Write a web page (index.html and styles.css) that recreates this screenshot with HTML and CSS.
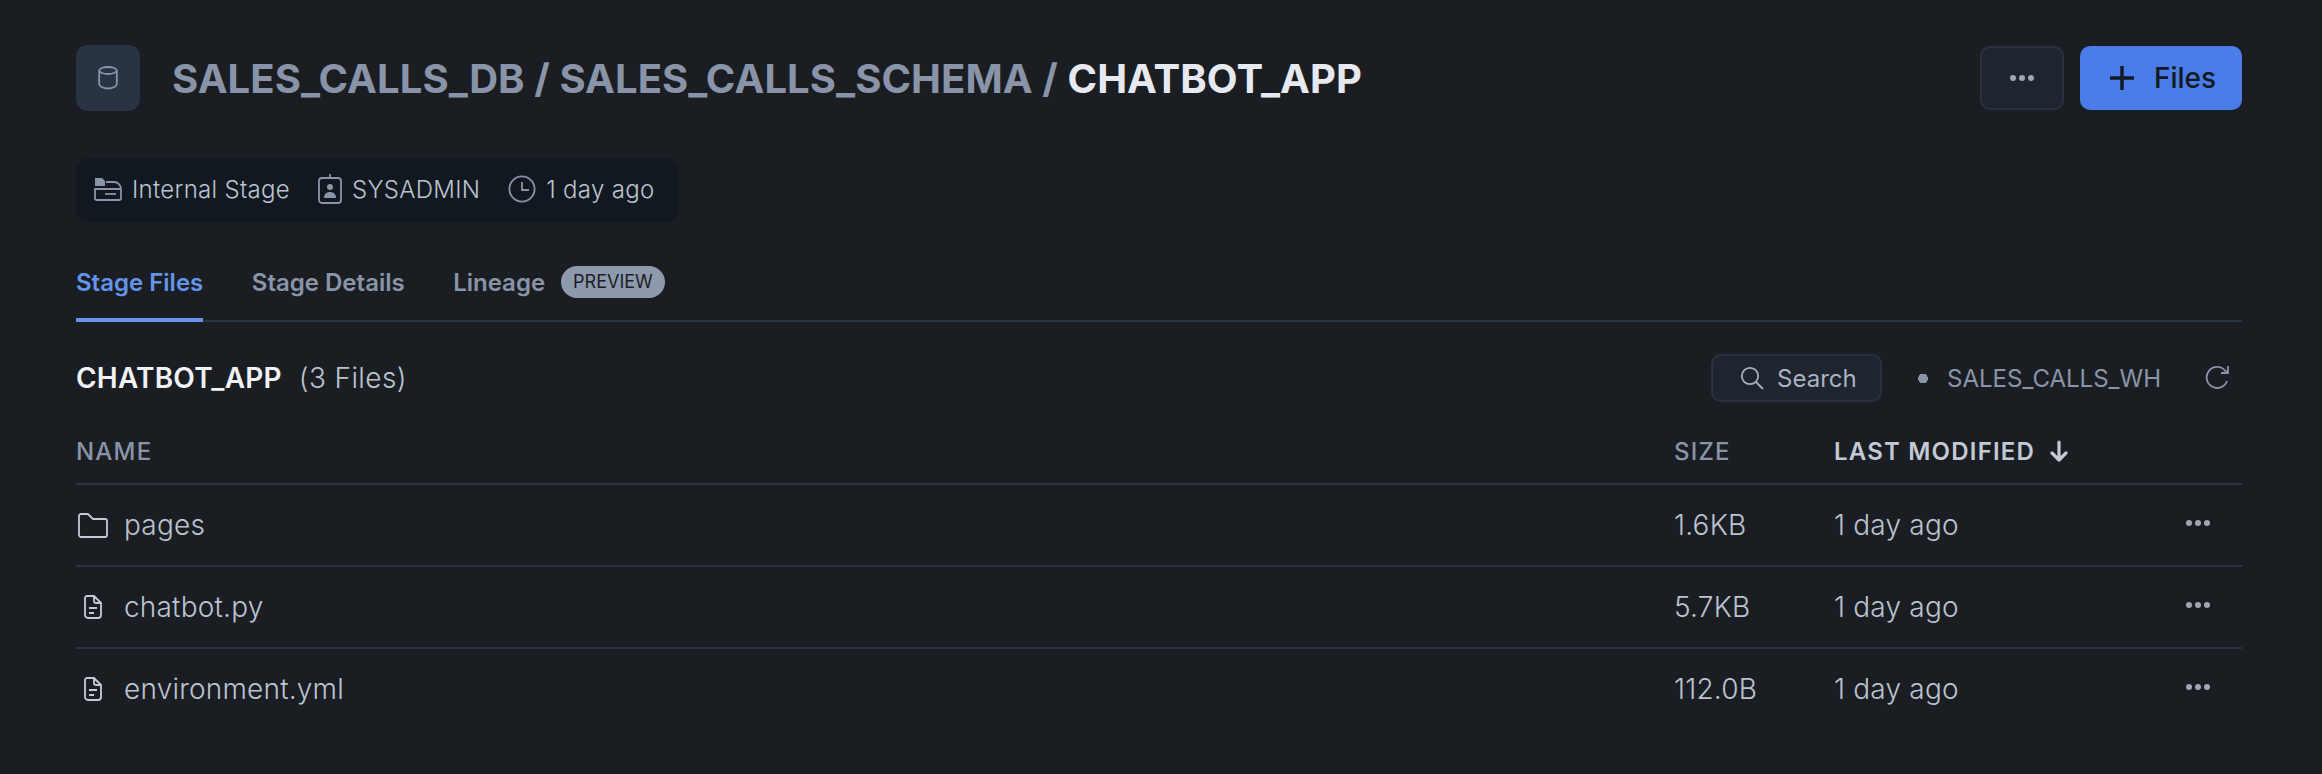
FILE: index.html
```html
<!DOCTYPE html>
<html lang="en">
<head>
    <meta charset="UTF-8">
    <title>CHATBOT_APP</title>
    <link rel="stylesheet" href="styles.css">
</head>
<body>
    <div class="page">
        <header class="top">
            <div class="db-icon">
                <svg width="20" height="24" viewBox="0 0 20 24" fill="none" stroke="#8a94a8" stroke-width="1.8">
                    <ellipse cx="10" cy="4.500" rx="8.800" ry="3.500"/>
                    <path d="M1.200 4.500V18c0 2.200 3.800 4.500 8.800 4.500s8.800-2.300 8.800-4.500V4.500"/>
                </svg>
            </div>
            <h1 class="crumbs">SALES_CALLS_DB / SALES_CALLS_SCHEMA / <span class="crumb-current">CHATBOT_APP</span></h1>
            <div class="top-actions">
                <button class="btn-more" type="button">
                    <svg width="26" height="8" viewBox="0 0 26 8" fill="#a0a6b4"><circle cx="4" cy="4" r="3"/><circle cx="13" cy="4" r="3"/><circle cx="22" cy="4" r="3"/></svg>
                </button>
                <button class="btn-files" type="button">
                    <svg width="24" height="24" viewBox="0 0 24 24" stroke="#141820" stroke-width="3.400" fill="none"><path d="M12 0v24M0 12h24"/></svg>
                    Files
                </button>
            </div>
        </header>

        <div class="meta">
            <span class="meta-item">
                <svg width="28" height="24" viewBox="0 0 28 24" fill="none" stroke="#8a94a8" stroke-width="1.800">
                    <path d="M1 1h7l3 3v5H1z" fill="#8a94a8" stroke="none"/>
                    <path d="M12 5h8a7 7 0 0 1 7 7H1v9a2 2 0 0 0 2 2h22a2 2 0 0 0 2-2v-9"/>
                    <path d="M11 17h11"/>
                </svg>
                Internal Stage
            </span>
            <span class="meta-item">
                <svg width="24" height="30" viewBox="0 0 24 30" fill="none" stroke="#8a94a8" stroke-width="1.800">
                    <path d="M12 0v4"/>
                    <rect x="1" y="4" width="22" height="25" rx="3"/>
                    <circle cx="12" cy="13" r="3" fill="#8a94a8" stroke="none"/>
                    <path d="M6 24c0-4 2.500-6 6-6s6 2 6 6z" fill="#8a94a8" stroke="none"/>
                </svg>
                SYSADMIN
            </span>
            <span class="meta-item">
                <svg width="28" height="28" viewBox="0 0 28 28" fill="none" stroke="#8a94a8" stroke-width="1.800">
                    <circle cx="14" cy="14" r="12.600"/>
                    <path d="M14 7v8h7"/>
                </svg>
                1 day ago
            </span>
        </div>

        <nav class="tabs">
            <a class="tab tab-active">Stage Files</a>
            <a class="tab">Stage Details</a>
            <a class="tab">Lineage <span class="badge">PREVIEW</span></a>
        </nav>

        <div class="toolbar">
            <div class="folder-title"><b>CHATBOT_APP</b><span class="folder-count">(3 Files)</span></div>
            <div class="toolbar-right">
                <button class="btn-search" type="button">
                    <svg width="24" height="24" viewBox="0 0 24 24" fill="none" stroke="#a9b1c2" stroke-width="1.800"><circle cx="10" cy="10" r="8.200"/><path d="M16 16l7 7"/></svg>
                    Search
                </button>
                <span class="warehouse">SALES_CALLS_WH</span>
                <svg class="refresh" width="26" height="26" viewBox="0 0 26 26" fill="none" stroke="#8a94a8" stroke-width="1.800">
                    <path d="M22 16a10.500 10.500 0 1 1-2-10.500L23 8M23 1v7h-7"/>
                </svg>
            </div>
        </div>

        <div class="file-table">
            <div class="row row-head">
                <div>NAME</div>
                <div>SIZE</div>
                <div class="sorted">LAST MODIFIED
                    <svg width="20" height="22" viewBox="0 0 20 22" fill="none" stroke="#c3c9d6" stroke-width="3.200" stroke-linecap="round" stroke-linejoin="round"><path d="M10 2v18M3 13l7 7 7-7"/></svg>
                </div>
                <div></div>
            </div>
            <div class="row">
                <div class="name-cell">
                    <span class="file-icon">
                        <svg width="30" height="25" viewBox="0 0 30 25" fill="none" stroke="#c3c9d6" stroke-width="1.800" stroke-linejoin="round"><path d="M1 3a2 2 0 0 1 2-2h7l5 5h12a2 2 0 0 1 2 2v14a2 2 0 0 1-2 2H3a2 2 0 0 1-2-2z"/></svg>
                    </span>
                    pages
                </div>
                <div>1.6KB</div>
                <div>1 day ago</div>
                <div class="row-more"><svg width="26" height="8" viewBox="0 0 26 8" fill="#a0a6b4"><circle cx="4" cy="4" r="3"/><circle cx="13" cy="4" r="3"/><circle cx="22" cy="4" r="3"/></svg></div>
            </div>
            <div class="row">
                <div class="name-cell">
                    <span class="file-icon">
                        <svg width="18" height="24" viewBox="0 0 18 24" fill="none" stroke="#c3c9d6" stroke-width="1.800" stroke-linejoin="round"><path d="M3 1h7l7 7v12a3 3 0 0 1-3 3H4a3 3 0 0 1-3-3V3a2 2 0 0 1 2-2zM10 1v5a2 2 0 0 0 2 2h5M5 13h8M5 18h5"/></svg>
                    </span>
                    chatbot.py
                </div>
                <div>5.7KB</div>
                <div>1 day ago</div>
                <div class="row-more"><svg width="26" height="8" viewBox="0 0 26 8" fill="#a0a6b4"><circle cx="4" cy="4" r="3"/><circle cx="13" cy="4" r="3"/><circle cx="22" cy="4" r="3"/></svg></div>
            </div>
            <div class="row">
                <div class="name-cell">
                    <span class="file-icon">
                        <svg width="18" height="24" viewBox="0 0 18 24" fill="none" stroke="#c3c9d6" stroke-width="1.800" stroke-linejoin="round"><path d="M3 1h7l7 7v12a3 3 0 0 1-3 3H4a3 3 0 0 1-3-3V3a2 2 0 0 1 2-2zM10 1v5a2 2 0 0 0 2 2h5M5 13h8M5 18h5"/></svg>
                    </span>
                    environment.yml
                </div>
                <div>112.0B</div>
                <div>1 day ago</div>
                <div class="row-more"><svg width="26" height="8" viewBox="0 0 26 8" fill="#a0a6b4"><circle cx="4" cy="4" r="3"/><circle cx="13" cy="4" r="3"/><circle cx="22" cy="4" r="3"/></svg></div>
            </div>
        </div>
    </div>
</body>
</html>
```

FILE: styles.css
```css
body {
    margin: 0;
    background-color: #1a1e23;
    font-family: Inter, "Noto Sans", sans-serif;
    color: #bcc3d1;
}
.page {
    padding: 45px 80px 0 76px;
    height: 774px;
    box-sizing: border-box;
    overflow: hidden;
}
.top {
    display: flex;
    align-items: center;
    height: 66px;
}
.db-icon {
    width: 64px;
    height: 66px;
    border-radius: 12px;
    background-color: #2a3344;
    display: flex;
    align-items: center;
    justify-content: center;
}
.crumbs {
    margin: 0 0 0 32px;
    font-size: 40px;
    font-weight: 700;
    letter-spacing: 0.08px;
    color: #8a94a8;
}
.crumb-current {
    color: #e6e9ef;
}
.top-actions {
    margin-left: auto;
    display: flex;
    gap: 16px;
}
.btn-more {
    width: 84px;
    height: 64px;
    background-color: #1e252f;
    border: 2px solid #2a3140;
    border-radius: 10px;
    display: flex;
    align-items: center;
    justify-content: center;
    padding: 0;
}
.btn-files {
    width: 162px;
    height: 64px;
    background-color: #4a7dea;
    color: #141820;
    border: none;
    border-radius: 10px;
    font: 500 28px Inter, sans-serif;
    display: flex;
    align-items: center;
    gap: 20px;
    padding: 0 0 0 30px;
}
.meta {
    margin-top: 47px;
    display: inline-flex;
    align-items: center;
    gap: 28px;
    height: 64px;
    padding: 0 25px 2px 18px;
    box-sizing: border-box;
    background-color: #111820;
    border-radius: 12px;
    font-size: 24px;
    font-weight: 350;
    letter-spacing: 0.3px;
    color: #bcc3d1;
}
.meta-item {
    display: flex;
    align-items: center;
    gap: 10px;
}
.tabs {
    margin-top: 30px;
    display: flex;
    gap: 48.500px;
    height: 68px;
    border-bottom: 2px solid #2a3347;
}
.tab {
    font-size: 24px;
    font-weight: 600;
    color: #8a94a8;
    display: flex;
    align-items: center;
    height: 60px;
    padding-bottom: 8px;
}
.tab-active {
    color: #6495ec;
    border-bottom: 4px solid #6495ec;
    padding-bottom: 6px;
}
.badge {
    margin-left: 16px;
    background-color: #8f99ad;
    color: #1a1e23;
    font-size: 18px;
    font-weight: 400;
    height: 32px;
    line-height: 32px;
    padding: 0 12px;
    border-radius: 16px;
}
.toolbar {
    display: flex;
    align-items: center;
    justify-content: space-between;
    height: 72px;
    margin-top: 20px;
}
.folder-title {
    font-size: 28px;
}
.folder-title b {
    color: #f0f2f6;
    font-weight: 600;
    letter-spacing: 0.2px;
}
.folder-count {
    margin-left: 17px;
    font-weight: 350;
    letter-spacing: 0.4px;
    color: #bcc3d1;
}
.toolbar-right {
    display: flex;
    align-items: center;
}
.btn-search {
    width: 171px;
    height: 48px;
    background-color: #1e252f;
    border: 2px solid #2a3140;
    border-radius: 10px;
    color: #a9b1c2;
    font: 400 24px Inter, sans-serif;
    display: flex;
    align-items: center;
    gap: 13px;
    padding: 0 0 0 27px;
}
.warehouse {
    margin-left: 36px;
    padding-left: 29px;
    font-size: 24px;
    color: #8a94a8;
    background: radial-gradient(circle 5px at 5px 50%, #8a94a8 95%, transparent 100%);
}
.refresh {
    margin: 0 11px 0 44px;
}
.file-table {
    margin-top: 5px;
}
.row {
    display: grid;
    grid-template-columns: 1598px 160px 1fr 57px;
    align-items: center;
    height: 80px;
    border-bottom: 2px solid #2a3347;
    font-size: 28px;
    font-weight: 350;
    letter-spacing: 0.2px;
    color: #bcc3d1;
}
.row:last-child {
    border-bottom: none;
}
.row-head {
    height: 64px;
    font-size: 24px;
    font-weight: 500;
    letter-spacing: 1.2px;
    color: #8a94a8;
}
.sorted {
    font-weight: 600;
    color: #c3c9d6;
    display: flex;
    align-items: center;
    gap: 14px;
}
.name-cell {
    display: flex;
    align-items: center;
}
.file-icon {
    width: 48px;
    display: flex;
    justify-content: center;
    padding-right: 15px;
    box-sizing: border-box;
}
.row-more {
    display: flex;
    margin-bottom: 4px;
}
```
